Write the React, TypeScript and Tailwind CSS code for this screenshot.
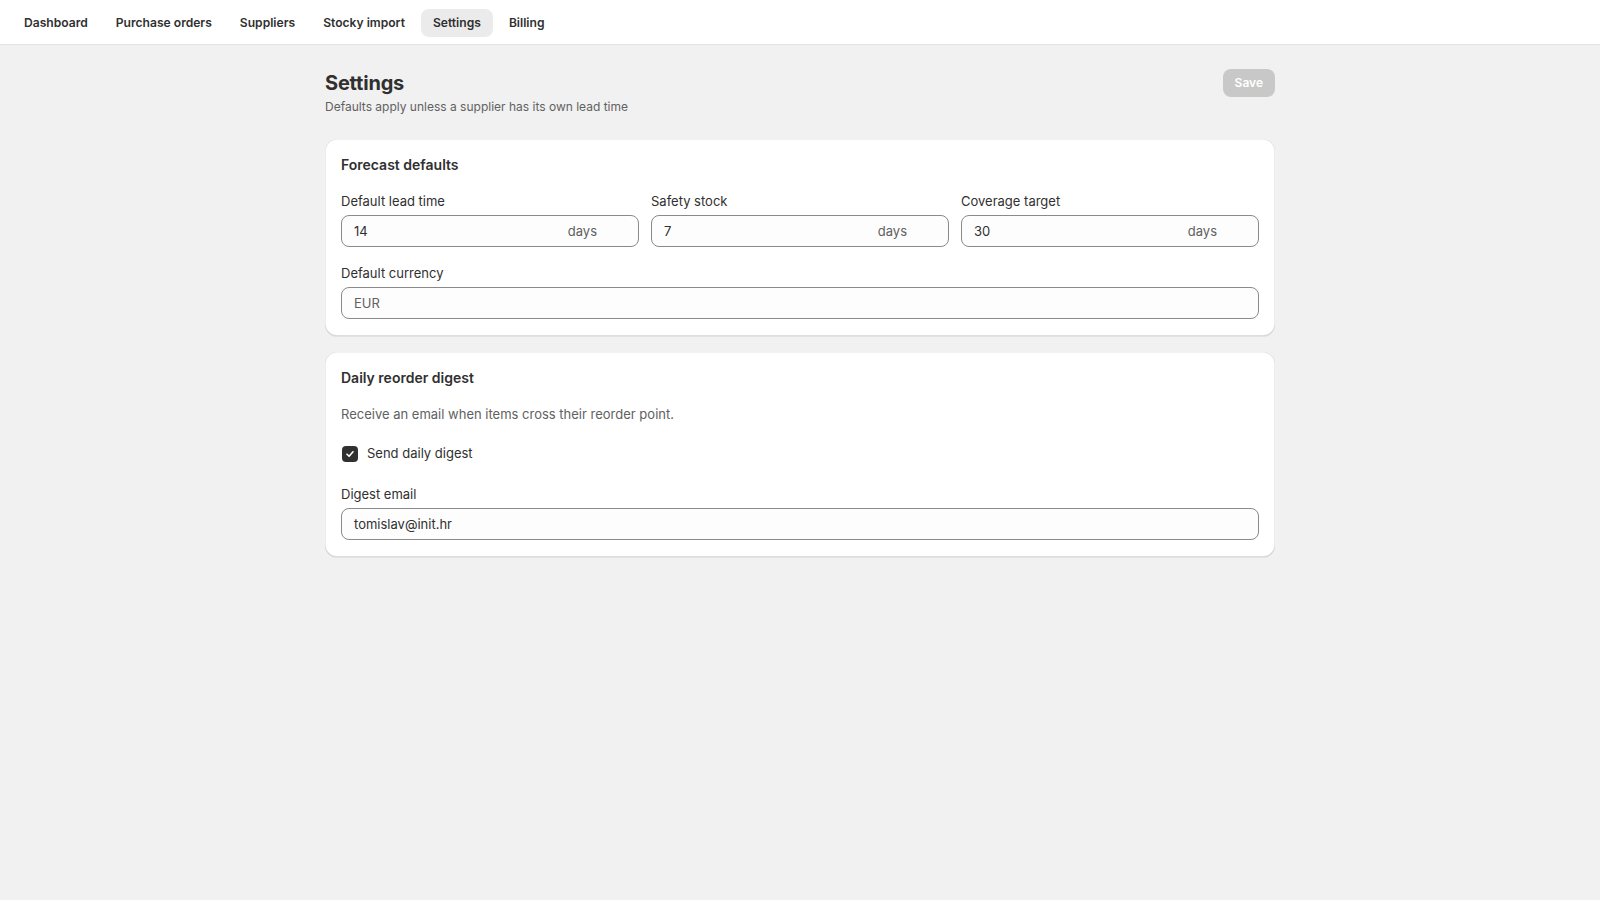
import React from "react";

const tabs = ["Dashboard", "Purchase orders", "Suppliers", "Stocky import", "Settings", "Billing"];

function SuffixField({ label, value }: { label: string; value: string }) {
  return (
    <div className="flex flex-col">
      <label className="text-[13px] leading-5 text-[#303030] mb-1">{label}</label>
      <div className="h-8 rounded-lg border border-[#8a8a8a] bg-[#fdfdfd] flex items-center justify-between pl-3 pr-[41px] pt-px">
        <span className="text-[13px] text-[#303030]">{value}</span>
        <span className="text-[13px] text-[#616161]">days</span>
      </div>
    </div>
  );
}

function TextField({ label, value, placeholder }: { label: string; value?: string; placeholder?: string }) {
  return (
    <div className="flex flex-col">
      <label className="text-[13px] leading-5 text-[#303030] mb-1">{label}</label>
      <div className="h-8 rounded-lg border border-[#8a8a8a] bg-[#fdfdfd] flex items-center px-3 pt-px">
        {value ? (
          <span className="text-[13px] text-[#303030]">{value}</span>
        ) : (
          <span className="text-[13px] text-[#616161]">{placeholder}</span>
        )}
      </div>
    </div>
  );
}

function Card({ children }: { children: React.ReactNode }) {
  return (
    <div className="rounded-xl bg-white p-4 pb-[17px] flex flex-col gap-4 shadow-[inset_1px_0_0_0_rgba(0,0,0,0.07),inset_-1px_0_0_0_rgba(0,0,0,0.07),inset_0_1px_0_0_rgba(0,0,0,0.05),inset_0_-1px_0_0_rgba(0,0,0,0.13),0_1px_0_0_rgba(26,26,26,0.07)]">
      {children}
    </div>
  );
}

export default function App() {
  return (
    <div className="min-h-screen bg-[#f1f1f1] font-['Inter',_'Liberation_Sans',_sans-serif] text-[#303030]">
      <nav className="h-[45px] bg-white border-b border-[#e3e3e3] flex items-center px-3 pt-[2px] gap-1">
        {tabs.map((t) => (
          <div
            key={t}
            className={`h-7 px-3 rounded-lg flex items-center text-[12.1px] font-semibold text-[#303030] ${
              t === "Settings" ? "bg-[#ebebeb]" : ""
            }`}
          >
            {t}
          </div>
        ))}
      </nav>
      <main className="max-w-[998px] mx-auto px-6 pt-[24px]">
        <div className="flex items-center justify-between h-7">
          <h1 className="text-[20px] leading-6 font-bold tracking-[-0.2px] text-[#303030]">Settings</h1>
          <button className="h-7 px-3 rounded-lg bg-[#c8c8c8] text-white text-[12px] font-semibold">Save</button>
        </div>
        <p className="text-[12px] leading-5 text-[#616161]">Defaults apply unless a supplier has its own lead time</p>
        <div className="mt-[22px] flex flex-col gap-4">
          <Card>
            <h2 className="text-[14px] leading-5 font-semibold">Forecast defaults</h2>
            <div className="grid grid-cols-3 gap-3">
              <SuffixField label="Default lead time" value="14" />
              <SuffixField label="Safety stock" value="7" />
              <SuffixField label="Coverage target" value="30" />
            </div>
            <TextField label="Default currency" placeholder="EUR" />
          </Card>
          <Card>
            <h2 className="text-[14px] leading-5 font-semibold">Daily reorder digest</h2>
            <p className="text-[13px] leading-5 text-[#616161]">Receive an email when items cross their reorder point.</p>
            <div className="h-7 flex items-center gap-[9px]">
              <span className="w-4 h-4 ml-px rounded-[4px] bg-[#303030] flex items-center justify-center">
                <svg width="10" height="10" viewBox="0 0 10 10" fill="none">
                  <path d="M2 5.2L4.1 7.3L8 2.8" stroke="white" strokeWidth="1.6" strokeLinecap="round" strokeLinejoin="round" />
                </svg>
              </span>
              <span className="text-[13px] text-[#303030]">Send daily digest</span>
            </div>
            <TextField label="Digest email" value="tomislav@init.hr" />
          </Card>
        </div>
      </main>
    </div>
  );
}
